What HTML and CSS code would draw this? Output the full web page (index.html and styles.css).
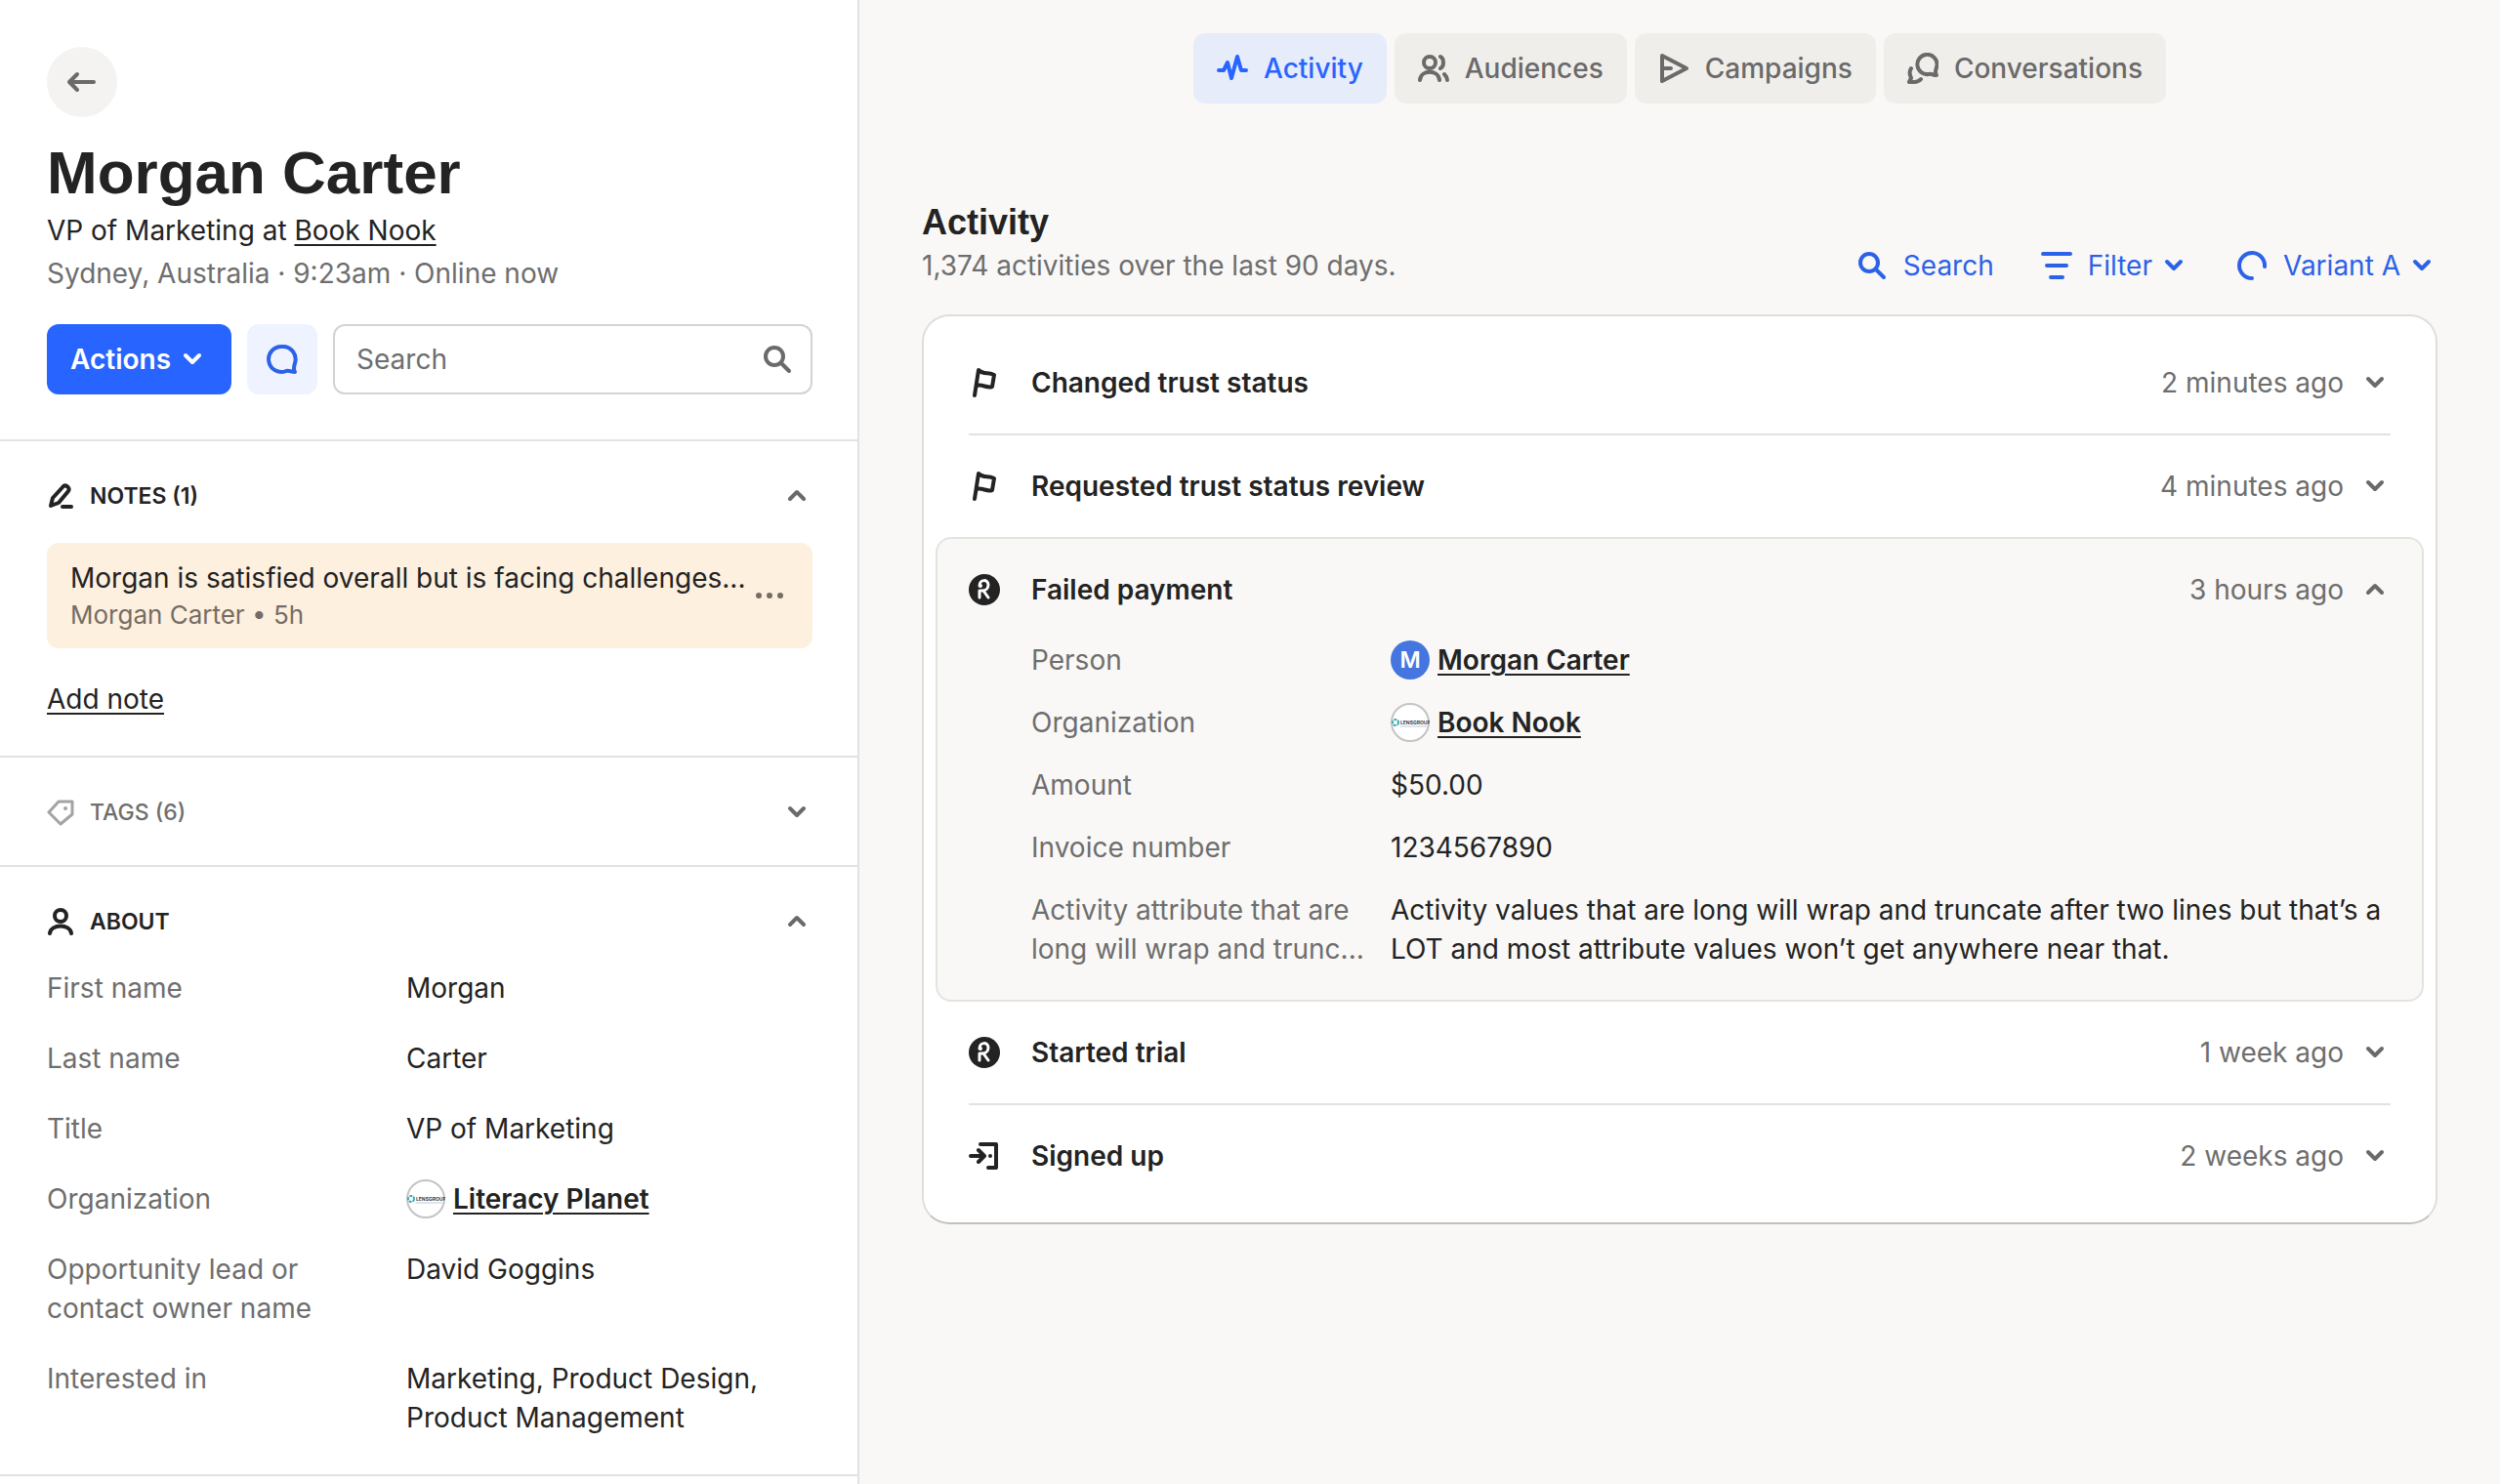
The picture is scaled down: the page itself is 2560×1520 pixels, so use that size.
FILE: index.html
```html
<!DOCTYPE html>
<html lang="en">
<head>
    <meta charset="UTF-8">
    <meta name="viewport" content="width=device-width, initial-scale=1.0">
    <title>Morgan Carter</title>
    <link rel="stylesheet" href="styles.css">
</head>
<body>
    <!-- shared icons -->
    <svg class="sprite" aria-hidden="true">
        <symbol id="chevron-down" viewBox="0 0 32 32"><path d="M9 12l7 7 7-7" fill="none" stroke="currentColor" stroke-width="4"/></symbol>
        <symbol id="chevron-up" viewBox="0 0 32 32"><path d="M9 19l7-7 7 7" fill="none" stroke="currentColor" stroke-width="4"/></symbol>
        <symbol id="search" viewBox="0 0 32 32"><g fill="none" stroke="currentColor" stroke-width="4"><circle cx="13" cy="13" r="9"/><path d="M20 20l8 8"/></g></symbol>
        <symbol id="flag" viewBox="0 0 32 32"><path d="M6 29L10 3c5 5 10 2 16 5l-2 12c-6 2-10-3-16-1" fill="none" stroke="currentColor" stroke-width="4"/></symbol>
        <symbol id="recharge" viewBox="0 0 32 32"><circle cx="16" cy="16" r="16" fill="currentColor"/><path d="M11 12c0-7 9-7 9-1 0 4-3 6-6 6h-3v7M15 17l5 7" fill="none" stroke="#fff" stroke-width="3"/><circle cx="12" cy="12" r="2" fill="#fff"/></symbol>
        <symbol id="org-logo" viewBox="0 0 40 40"><circle cx="20" cy="20" r="19" fill="#fff" stroke="#c4c4c4" stroke-width="2"/><circle cx="5" cy="20" r="3" fill="none" stroke="#3aa9b5" stroke-width="2" stroke-dasharray="3 1" stroke-linecap="butt"/><text x="10" y="22" font-family="Inter, sans-serif" font-size="5" font-weight="700" fill="#2c3e50">LENSGROUP</text><path d="M10 24h27" stroke="#b9cdd2"/></symbol>
    </svg>

    <div class="page">
        <aside class="sidebar">
            <header class="profile">
                <button class="back" aria-label="Back">
                    <svg class="icon" viewBox="0 0 32 32"><path d="M28 16H4M11 8l-8 8 8 8" fill="none" stroke="currentColor" stroke-width="4"/></svg>
                </button>
                <h1>Morgan Carter</h1>
                <p class="role">VP of Marketing at <a href="#">Book Nook</a></p>
                <p class="location">Sydney, Australia · 9:23am · Online now</p>
                <div class="profile-actions">
                    <button class="actions">Actions <svg class="icon"><use href="#chevron-down"/></svg></button>
                    <button class="chat" aria-label="Message">
                        <svg class="icon" viewBox="0 0 32 32"><path d="M16 3a13 13 0 1 0 4 25c3-1 5 1 9 1-2-3-1-6 0-9A13 13 0 0 0 16 3z" fill="none" stroke="currentColor" stroke-width="4"/></svg>
                    </button>
                    <label class="search-box">
                        <input type="text" placeholder="Search" aria-label="Search">
                        <svg class="icon"><use href="#search"/></svg>
                    </label>
                </div>
            </header>

            <section class="panel">
                <button class="panel-title" aria-expanded="true">
                    <svg class="icon-small" viewBox="0 0 28 28"><path d="M4 24l2-8L17 4c3-2 7 2 5 5L12 21z" fill="none" stroke="currentColor" stroke-width="4"/><path d="M16 25h9" stroke="currentColor" stroke-width="4"/></svg>
                    <span>NOTES (1)</span>
                    <svg class="icon"><use href="#chevron-up"/></svg>
                </button>
                <div class="note">
                    <div class="note-body">
                        <p>Morgan is satisfied overall but is facing challenges...</p>
                        <p class="note-meta">Morgan Carter • 5h</p>
                    </div>
                    <button class="note-menu" aria-label="More">
                        <svg class="icon" viewBox="0 0 32 32" fill="currentColor"><circle cx="5" cy="16" r="3"/><circle cx="16" cy="16" r="3"/><circle cx="27" cy="16" r="3"/></svg>
                    </button>
                </div>
                <a class="add-note" href="#">Add note</a>
            </section>

            <section class="panel collapsed">
                <button class="panel-title" aria-expanded="false">
                    <svg class="icon-small" viewBox="0 0 28 28"><path d="M2 14L12 3h14v13L14 26z" fill="none" stroke="currentColor" stroke-width="3"/><circle cx="19" cy="10" r="2" fill="currentColor"/></svg>
                    <span>TAGS (6)</span>
                    <svg class="icon"><use href="#chevron-down"/></svg>
                </button>
            </section>

            <section class="panel">
                <button class="panel-title" aria-expanded="true">
                    <svg class="icon-small" viewBox="0 0 28 28"><g fill="none" stroke="currentColor" stroke-width="4"><circle cx="14" cy="8" r="6"/><path d="M3 26c1-10 21-10 22 0"/></g></svg>
                    <span>ABOUT</span>
                    <svg class="icon"><use href="#chevron-up"/></svg>
                </button>
                <dl class="about">
                    <dt>First name</dt>
                    <dd>Morgan</dd>
                    <dt>Last name</dt>
                    <dd>Carter</dd>
                    <dt>Title</dt>
                    <dd>VP of Marketing</dd>
                    <dt>Organization</dt>
                    <dd class="entity"><svg class="avatar"><use href="#org-logo"/></svg><a href="#">Literacy Planet</a></dd>
                    <dt>Opportunity lead or contact owner name</dt>
                    <dd>David Goggins</dd>
                    <dt>Interested in</dt>
                    <dd>Marketing, Product Design, Product Management</dd>
                </dl>
            </section>
        </aside>

        <main class="content">
            <nav class="tabs">
                <a class="tab active" href="#">
                    <svg class="icon" viewBox="0 0 32 32"><path d="M2 18h5l4-8 4 16 6-22 4 14h5" fill="none" stroke="currentColor" stroke-width="4"/></svg>
                    Activity
                </a>
                <a class="tab" href="#">
                    <svg class="icon" viewBox="0 0 32 32"><g fill="none" stroke="currentColor" stroke-width="4"><circle cx="12" cy="10" r="6"/><path d="M2 28c1-11 19-11 20 0M23 4c4 2 4 10 0 12M27 22c2 2 3 4 3 6"/></g></svg>
                    Audiences
                </a>
                <a class="tab" href="#">
                    <svg class="icon" viewBox="0 0 32 32"><path d="M4 3l25 13L4 29zM4 16h9" fill="none" stroke="currentColor" stroke-width="4"/></svg>
                    Campaigns
                </a>
                <a class="tab" href="#">
                    <svg class="icon" viewBox="0 0 32 32"><path d="M19 2a10 10 0 1 0 3 20c3-1 4 1 8 1-2-3-1-5 0-8A10 10 0 0 0 19 2zM4 16c-3 4-1 7 0 10l-2 4c4 0 9 1 12-3" fill="none" stroke="currentColor" stroke-width="4"/></svg>
                    Conversations
                </a>
            </nav>

            <div class="content-header">
                <div>
                    <h2>Activity</h2>
                    <p>1,374 activities over the last 90 days.</p>
                </div>
                <div class="tools">
                    <button class="tool"><svg class="icon"><use href="#search"/></svg> <span>Search</span></button>
                    <button class="tool">
                        <svg class="icon" viewBox="0 0 32 32"><path d="M2 4h28M6 16h20M10 28h12" stroke="currentColor" stroke-width="4"/></svg>
                        <span>Filter</span>
                        <svg class="icon"><use href="#chevron-down"/></svg>
                    </button>
                    <label class="tool">
                        <svg class="icon" viewBox="0 0 32 32"><path d="M16 29A13 13 0 1 1 29 17" fill="none" stroke="currentColor" stroke-width="4"/></svg>
                        <select aria-label="Variant">
                            <option>Variant A</option>
                        </select>
                        <svg class="icon"><use href="#chevron-down"/></svg>
                    </label>
                </div>
            </div>

            <div class="card">
                <div class="event">
                    <button class="event-title" aria-expanded="false">
                        <svg class="icon"><use href="#flag"/></svg>
                        <span class="name">Changed trust status</span>
                        <span class="time">2 minutes ago</span>
                        <svg class="icon chevron"><use href="#chevron-down"/></svg>
                    </button>
                </div>
                <div class="event">
                    <button class="event-title" aria-expanded="false">
                        <svg class="icon"><use href="#flag"/></svg>
                        <span class="name">Requested trust status review</span>
                        <span class="time">4 minutes ago</span>
                        <svg class="icon chevron"><use href="#chevron-down"/></svg>
                    </button>
                </div>
                <div class="event open">
                    <button class="event-title" aria-expanded="true">
                        <svg class="icon"><use href="#recharge"/></svg>
                        <span class="name">Failed payment</span>
                        <span class="time">3 hours ago</span>
                        <svg class="icon chevron"><use href="#chevron-up"/></svg>
                    </button>
                    <dl class="attributes">
                        <dt>Person</dt>
                        <dd class="entity"><span class="avatar initial">M</span><a href="#">Morgan Carter</a></dd>
                        <dt>Organization</dt>
                        <dd class="entity"><svg class="avatar"><use href="#org-logo"/></svg><a href="#">Book Nook</a></dd>
                        <dt>Amount</dt>
                        <dd>$50.00</dd>
                        <dt>Invoice number</dt>
                        <dd>1234567890</dd>
                        <dt>Activity attribute that are long will wrap and trunc...</dt>
                        <dd>Activity values that are long will wrap and truncate after two lines but that’s a LOT and most attribute values won’t get anywhere near that.</dd>
                    </dl>
                </div>
                <div class="event">
                    <button class="event-title" aria-expanded="false">
                        <svg class="icon"><use href="#recharge"/></svg>
                        <span class="name">Started trial</span>
                        <span class="time">1 week ago</span>
                        <svg class="icon chevron"><use href="#chevron-down"/></svg>
                    </button>
                </div>
                <div class="event">
                    <button class="event-title" aria-expanded="false">
                        <svg class="icon" viewBox="0 0 32 32"><g fill="none" stroke="currentColor" stroke-width="4"><path d="M2 16h13M10 10l6 6-6 6M12 4h16v24h-8"/></g><circle cx="22" cy="16" r="2" fill="currentColor"/></svg>
                        <span class="name">Signed up</span>
                        <span class="time">2 weeks ago</span>
                        <svg class="icon chevron"><use href="#chevron-down"/></svg>
                    </button>
                </div>
            </div>
        </main>
    </div>
</body>
</html>
```
FILE: styles.css
```css
* {
    box-sizing: border-box;
}

body {
    font-family: 'Inter', 'Liberation Sans', sans-serif;
    font-size: 28px;
    line-height: 40px;
    margin: 0;
    color: #232323;
    background-color: #f9f8f6;
}

h1, h2, p, dl, dd {
    margin: 0;
}

a {
    color: inherit;
    text-underline-offset: 4px;
    text-decoration-thickness: 2px;
}

button, input, select {
    font: inherit;
    color: inherit;
    background: none;
    border: none;
    padding: 0;
    margin: 0;
}

button, select {
    cursor: pointer;
}

svg {
    stroke-linecap: round;
    stroke-linejoin: round;
}

.sprite {
    display: none;
}

.icon {
    width: 32px;
    height: 32px;
    flex-shrink: 0;
}

.icon-small {
    width: 28px;
    height: 28px;
    flex-shrink: 0;
}

.page {
    display: flex;
    min-height: 100vh;
}

/* Sidebar */
.sidebar {
    width: 880px;
    flex-shrink: 0;
    background-color: #ffffff;
    border-right: 2px solid #e2e2e1;
}

.profile {
    padding: 48px 46px 46px 48px;
    border-bottom: 2px solid #e2e2e1;
}

.back {
    display: flex;
    align-items: center;
    justify-content: center;
    width: 72px;
    height: 72px;
    margin-bottom: 20px;
    border-radius: 50%;
    color: #6a6a6a;
    background-color: #f4f3f2;
}

h1 {
    font-family: 'Liberation Sans', sans-serif;
    font-size: 62px;
    line-height: 74px;
}

.role, .location {
    line-height: 44px;
}

.location {
    color: #6e6e6e;
}

.profile-actions {
    display: flex;
    gap: 16px;
    margin-top: 30px;
}

.actions {
    display: flex;
    align-items: center;
    gap: 6px;
    height: 72px;
    padding: 0 24px;
    border-radius: 12px;
    font-weight: 600;
    color: #ffffff;
    background-color: #2864ff;
}

.chat {
    display: flex;
    flex-shrink: 0;
    align-items: center;
    justify-content: center;
    width: 72px;
    height: 72px;
    border-radius: 12px;
    color: #2c62e8;
    background-color: #eff3ff;
}

.search-box {
    display: flex;
    flex: 1;
    align-items: center;
    min-width: 0;
    height: 72px;
    padding: 0 18px 0 22px;
    border: 2px solid #d4d3d0;
    border-radius: 12px;
    color: #6a6a6a;
}

.search-box input {
    flex: 1;
    min-width: 0;
    outline: none;
}

.search-box input::placeholder {
    color: #6e6e6e;
    opacity: 1;
}

.panel {
    padding: 36px 46px 38px 48px;
    border-bottom: 2px solid #e2e2e1;
}

.panel.collapsed {
    padding-bottom: 34px;
}

.panel-title {
    display: flex;
    align-items: center;
    gap: 16px;
    width: 100%;
    font-size: 23px;
    font-weight: 600;
    text-align: left;
}

.panel-title span {
    flex: 1;
}

.panel-title .icon {
    color: #6a6a6a;
}

.collapsed .panel-title {
    font-weight: 500;
    color: #6e6e6e;
}

.collapsed .icon-small {
    color: #a3a3a3;
}

.note {
    display: flex;
    align-items: center;
    gap: 16px;
    margin: 28px 0 32px;
    padding: 16px 28px 16px 24px;
    border-radius: 12px;
    background-color: #fdf0df;
}

.note-body {
    flex: 1;
    min-width: 0;
    white-space: nowrap;
}

.note-meta {
    font-size: 26px;
    line-height: 36px;
    color: #756d65;
}

.note-menu {
    display: flex;
    color: #756d65;
}

.add-note {
    display: inline-block;
    vertical-align: top;
}

.about, .attributes {
    display: grid;
    grid-template-columns: 352px 1fr;
    gap: 32px 16px;
}

.about {
    margin-top: 28px;
}

.about dt {
    padding-right: 64px;
}

dt {
    color: #6e6e6e;
}

.entity {
    display: flex;
    align-items: center;
    gap: 8px;
    font-weight: 600;
}

.avatar {
    width: 40px;
    height: 40px;
    flex-shrink: 0;
}

.initial {
    border-radius: 50%;
    font-size: 23px;
    text-align: center;
    color: #ffffff;
    background-color: #4576e0;
}

/* Main column */
.content {
    flex: 1;
    min-width: 0;
    padding: 34px 64px;
}

.tabs {
    display: flex;
    justify-content: center;
    gap: 8px;
}

.tab {
    display: flex;
    align-items: center;
    gap: 16px;
    height: 72px;
    padding: 0 24px;
    border-radius: 12px;
    font-weight: 500;
    text-decoration: none;
    color: #6a6a6a;
    background-color: #f0eeea;
}

.tab.active {
    color: #2864ff;
    background-color: #e6ecfa;
}

.content-header {
    display: flex;
    align-items: flex-end;
    justify-content: space-between;
    margin: 98px 0 30px;
}

h2 {
    font-family: 'Liberation Sans', sans-serif;
    font-size: 36px;
    line-height: 48px;
}

.content-header p {
    color: #6e6e6e;
}

.tools {
    display: flex;
    gap: 48px;
    color: #2c62e8;
}

.tool {
    display: flex;
    align-items: center;
    gap: 6px;
}

.tool .icon:first-child {
    margin-right: 10px;
}

.tool select {
    appearance: none;
}

.card {
    padding: 16px 0;
    border: 2px solid #dededc;
    border-bottom-color: #c0c0bf;
    border-radius: 28px;
    background-color: #ffffff;
}

.event {
    margin: 0 46px;
}

.event-title {
    display: flex;
    align-items: center;
    width: 100%;
    padding: 32px 0;
    text-align: left;
}

/* divider only between two closed rows */
.event:not(.open) + .event:not(.open) {
    border-top: 2px solid #e2e2e1;
}

.name {
    flex: 1;
    margin-left: 32px;
    font-weight: 600;
}

.time {
    margin-right: 16px;
    color: #6e6e6e;
}

.chevron {
    color: #6a6a6a;
}

.event.open {
    margin: 0 12px;
    padding: 0 32px 32px;
    border: 2px solid #e3e3e0;
    border-radius: 16px;
    background-color: #f9f8f6;
}

.attributes {
    row-gap: 24px;
    padding-left: 64px;
}
```
